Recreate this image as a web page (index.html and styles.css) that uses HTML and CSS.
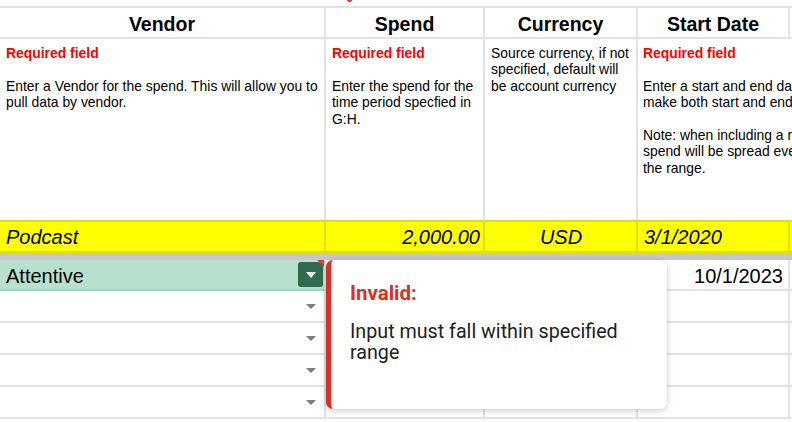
FILE: index.html
```html
<!DOCTYPE html>
<html>
<head>
<meta charset="utf-8">
<link rel="stylesheet" href="styles.css">
</head>
<body>
<div class="sheet">
  <div class="topstrip"><span class="clip-red"></span></div>
  <div class="grid">
    <div class="cell head">Vendor</div>
    <div class="cell head">Spend</div>
    <div class="cell head">Currency</div>
    <div class="cell head">Start Date</div>
    <div class="cell head"></div>

    <div class="cell desc">
      <div class="req">Required field</div>
      <div class="para">Enter a Vendor for the spend. This will allow you to pull data by vendor.</div>
    </div>
    <div class="cell desc">
      <div class="req">Required field</div>
      <div class="para">Enter the spend for the time period specfied in G:H.</div>
    </div>
    <div class="cell desc">
      <div>Source currency, if not specified, default will be account currency</div>
    </div>
    <div class="cell desc merged">
      <div class="req">Required field</div>
      <div class="para nowrap">Enter a start and end date range. To<br>make both start and end the same day</div>
      <div class="para nowrap">Note: when including a range, the total<br>spend will be spread evenly across<br>the range.</div>
    </div>

    <div class="cell yel left">Podcast</div>
    <div class="cell yel right">2,000.00</div>
    <div class="cell yel center">USD</div>
    <div class="cell yel left">3/1/2020</div>
    <div class="cell yel"></div>

    <div class="divider"></div>

    <div class="cell row vendor selected">
      <span class="val">Attentive</span>
      <span class="dd-btn"><span class="tri white"></span></span>
      <span class="err-corner"></span>
    </div>
    <div class="cell row sel-row"></div>
    <div class="cell row sel-row"></div>
    <div class="cell row sel-row right">10/1/2023</div>
    <div class="cell row sel-row"></div>

    <div class="cell row vendor"><span></span><span class="tri gray"></span></div>
    <div class="cell row"></div>
    <div class="cell row"></div>
    <div class="cell row"></div>
    <div class="cell row"></div>

    <div class="cell row vendor"><span></span><span class="tri gray"></span></div>
    <div class="cell row"></div>
    <div class="cell row"></div>
    <div class="cell row"></div>
    <div class="cell row"></div>

    <div class="cell row vendor"><span></span><span class="tri gray"></span></div>
    <div class="cell row"></div>
    <div class="cell row"></div>
    <div class="cell row"></div>
    <div class="cell row"></div>

    <div class="cell row vendor"><span></span><span class="tri gray"></span></div>
    <div class="cell row"></div>
    <div class="cell row"></div>
    <div class="cell row"></div>
    <div class="cell row"></div>
  </div>

  <div class="tooltip">
    <div class="tt-title">Invalid:</div>
    <div class="tt-body">Input must fall within specified range</div>
  </div>
</div>
</body>
</html>
```

FILE: styles.css
```css
* { box-sizing: border-box; }
html, body { margin: 0; padding: 0; background: #fff; }
body { width: 792px; height: 422px; overflow: hidden; font-family: "Liberation Sans", Arial, sans-serif; color: #000; }

.sheet { position: relative; width: 792px; height: 422px; overflow: hidden; }

.topstrip { height: 6px; padding-left: 347px; overflow: hidden; }
.clip-red { display: block; width: 5px; height: 2px; background: #e53935; border-radius: 0 0 2px 2px; }

.grid {
  display: grid;
  grid-template-columns: 326px 159px 153px 152px 160px;
  border-top: 2px solid #e2e2e2;
  width: 950px;
}

.cell {
  border-right: 2px solid #e2e2e2;
  overflow: hidden;
}

.head {
  height: 31px;
  border-bottom: 2px solid #e2e2e2;
  font-weight: bold;
  font-size: 19.5px;
  display: flex;
  align-items: center;
  justify-content: center;
  padding-top: 3px;
}

.desc {
  height: 181px;
  padding: 6px 1px 0 6px;
  font-size: 13.9px;
  line-height: 16.4px;
}
.desc.merged { grid-column: span 2; padding-left: 5px; }
.req { color: #f00; font-weight: bold; }
.para { margin-top: 16.4px; }
.nowrap { white-space: nowrap; }

.yel {
  height: 33px;
  background: #ffff00;
  border-top: 2px solid #dede00;
  border-bottom: 2px solid #dede00;
  border-right-color: #dede00;
  font-style: italic;
  font-size: 20px;
  display: flex;
  align-items: center;
  padding: 1px 5px 0 6px;
}
.left { justify-content: flex-start; }
.right { justify-content: flex-end; }
.center { justify-content: center; }
.yel.right { padding-right: 3px; }

.divider { grid-column: 1 / -1; height: 7px; background: #c7c7c7; }

.row {
  height: 32px;
  border-bottom: 2px solid #e2e2e2;
  display: flex;
  align-items: center;
  font-size: 20px;
  padding: 0 5px 0 6px;
}
.row.vendor { justify-content: space-between; padding-right: 8px; position: relative; }
.row.sel-row { height: 31px; padding-top: 4px; }
.row.selected {
  height: 31px;
  background: #b7e1cd;
  border-bottom-color: #a3d4bd;
  padding-right: 1px;
}
.row.selected .val { padding-top: 4px; }
.row.right { padding-right: 5px; }

.dd-btn {
  width: 25px; height: 25px;
  background: #2f6b4e;
  border-radius: 3px;
  display: flex; align-items: center; justify-content: center;
}
.tri { width: 0; height: 0; border-left: 5.5px solid transparent; border-right: 5.5px solid transparent; }
.tri.white { border-top: 6px solid #fff; margin-top: 1px; }
.tri.gray { border-top: 5px solid #7a7a7a; margin-top: 1px; }

.err-corner {
  position: absolute;
  right: -2px; top: 0;
  width: 0; height: 0;
  border-top: 9px solid #e53935;
  border-left: 9px solid transparent;
}

.tooltip {
  position: absolute;
  left: 326px; top: 260px;
  width: 341px; height: 149px;
  background: #fff;
  border-left: 5px solid #d93025;
  border-radius: 7px;
  box-shadow: 0 2px 7px rgba(0,0,0,0.18), 0 0 2px rgba(0,0,0,0.08);
  padding: 21px 22px 0 19px;
  font-family: Roboto, "Noto Sans", sans-serif;
}
.tt-title { color: #d93025; font-weight: bold; font-size: 20.5px; line-height: 24px; }
.tt-body { margin-top: 15.8px; font-size: 19.7px; line-height: 21px; color: #202124; }
```
